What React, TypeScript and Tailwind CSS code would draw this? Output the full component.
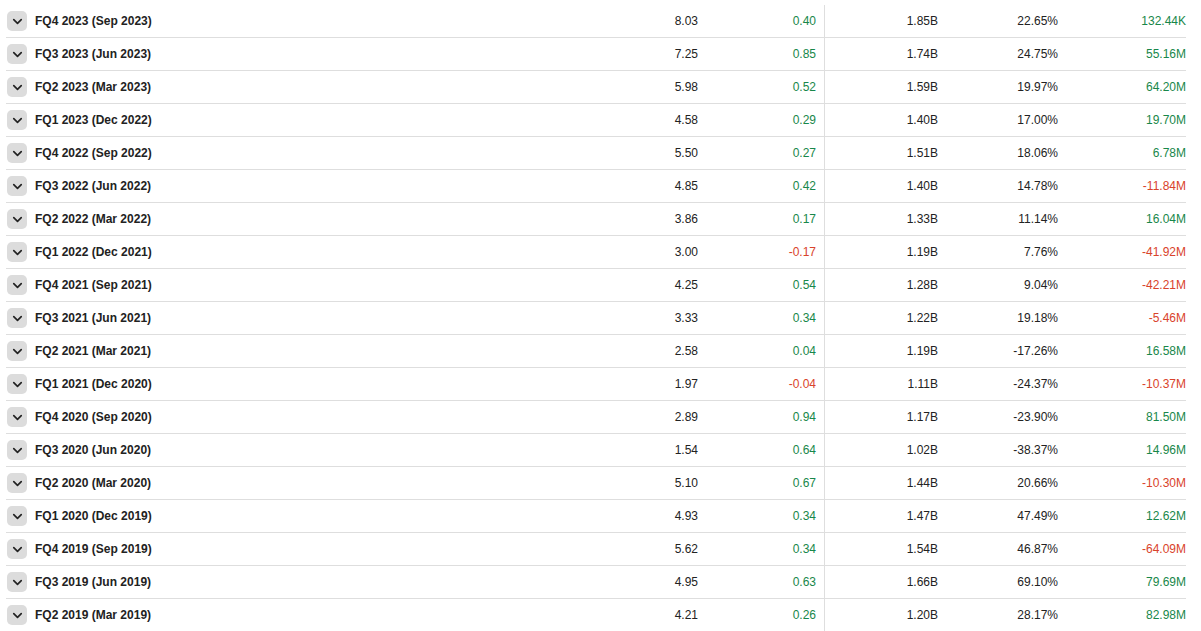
import { ChevronDown } from 'lucide-react'

type Row = [string, string, string, string, string, string]

const rows: Row[] = [
  ['FQ4 2023 (Sep 2023)', '8.03', '0.40', '1.85B', '22.65%', '132.44K'],
  ['FQ3 2023 (Jun 2023)', '7.25', '0.85', '1.74B', '24.75%', '55.16M'],
  ['FQ2 2023 (Mar 2023)', '5.98', '0.52', '1.59B', '19.97%', '64.20M'],
  ['FQ1 2023 (Dec 2022)', '4.58', '0.29', '1.40B', '17.00%', '19.70M'],
  ['FQ4 2022 (Sep 2022)', '5.50', '0.27', '1.51B', '18.06%', '6.78M'],
  ['FQ3 2022 (Jun 2022)', '4.85', '0.42', '1.40B', '14.78%', '-11.84M'],
  ['FQ2 2022 (Mar 2022)', '3.86', '0.17', '1.33B', '11.14%', '16.04M'],
  ['FQ1 2022 (Dec 2021)', '3.00', '-0.17', '1.19B', '7.76%', '-41.92M'],
  ['FQ4 2021 (Sep 2021)', '4.25', '0.54', '1.28B', '9.04%', '-42.21M'],
  ['FQ3 2021 (Jun 2021)', '3.33', '0.34', '1.22B', '19.18%', '-5.46M'],
  ['FQ2 2021 (Mar 2021)', '2.58', '0.04', '1.19B', '-17.26%', '16.58M'],
  ['FQ1 2021 (Dec 2020)', '1.97', '-0.04', '1.11B', '-24.37%', '-10.37M'],
  ['FQ4 2020 (Sep 2020)', '2.89', '0.94', '1.17B', '-23.90%', '81.50M'],
  ['FQ3 2020 (Jun 2020)', '1.54', '0.64', '1.02B', '-38.37%', '14.96M'],
  ['FQ2 2020 (Mar 2020)', '5.10', '0.67', '1.44B', '20.66%', '-10.30M'],
  ['FQ1 2020 (Dec 2019)', '4.93', '0.34', '1.47B', '47.49%', '12.62M'],
  ['FQ4 2019 (Sep 2019)', '5.62', '0.34', '1.54B', '46.87%', '-64.09M'],
  ['FQ3 2019 (Jun 2019)', '4.95', '0.63', '1.66B', '69.10%', '79.69M'],
  ['FQ2 2019 (Mar 2019)', '4.21', '0.26', '1.20B', '28.17%', '82.98M'],
]

const signColor = (v: string) => (v.startsWith('-') ? 'text-[#d9432b]' : 'text-[#18874a]')

export default function App() {
  return (
    <div className="min-h-screen bg-white pt-[5px] font-['Liberation_Sans',Arial,sans-serif] text-xs text-[#222]">
      <div className="ml-[6px] w-[1180px]">
        {rows.map((r) => (
          <div
            key={r[0]}
            className="grid h-[33px] grid-cols-[572px_120px_127px_113px_120px_128px] border-b border-[#dedede]"
          >
            <div className="flex items-center gap-2 pl-px">
              <span className="flex h-5 w-5 items-center justify-center rounded-[5px] bg-[#dcdcdc]">
                <ChevronDown size={15} strokeWidth={2.6} className="text-[#222]" />
              </span>
              <span className="font-bold">{r[0]}</span>
            </div>
            <div className="flex items-center justify-end">{r[1]}</div>
            <div className={`flex items-center justify-end border-r border-[#dedede] pr-2 ${signColor(r[2])}`}>
              {r[2]}
            </div>
            <div className="flex items-center justify-end">{r[3]}</div>
            <div className="flex items-center justify-end">{r[4]}</div>
            <div className={`flex items-center justify-end ${signColor(r[5])}`}>{r[5]}</div>
          </div>
        ))}
      </div>
    </div>
  )
}
